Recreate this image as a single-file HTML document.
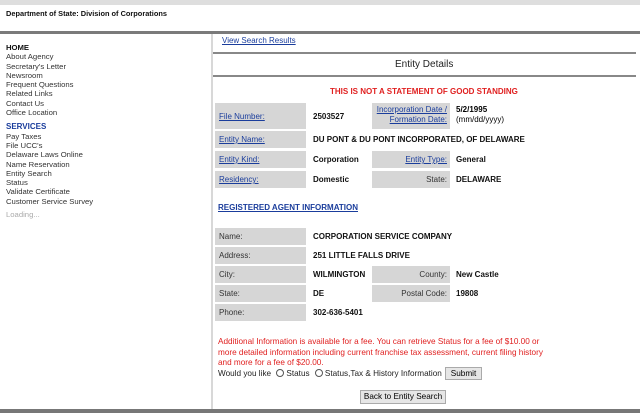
<!DOCTYPE html>
<html><head><style>
*{margin:0;padding:0;box-sizing:border-box}
body{width:640px;height:413px;overflow:hidden;background:#fff;font-family:"Liberation Sans",Arial,sans-serif;font-size:8px;color:#000;position:relative}
.a{position:absolute;white-space:nowrap}
.lnk{color:#1a3d9c;text-decoration:underline}
.box{position:absolute;background:#d6d6d6}
.side{color:#333;line-height:9.3px;font-size:7.7px}
.b{font-weight:bold;color:#111}
.btn{position:absolute;background:#e6e6e6;border:1px solid #aaa;font-size:8.2px;text-align:center;line-height:12px}
.rad{display:inline-block;width:8px;height:8px;border:1px solid #555;border-radius:50%;vertical-align:-1px;margin:0 2px 0 3px}
</style></head><body>
<div class="a" style="left:0;top:0;width:640px;height:5px;background:#dedede"></div>
<div class="a b" style="left:6px;top:9px;font-size:7.4px">Department of State: Division of Corporations</div>
<div class="a" style="left:0;top:31px;width:640px;height:3px;background:#7a7a7a"></div>
<div class="a" style="left:211px;top:34px;width:2px;height:375px;background:#d8d8d8"></div>
<div class="a side" style="left:6px;top:43px">
<div class="b">HOME</div><div>About Agency</div><div>Secretary's Letter</div><div>Newsroom</div><div>Frequent Questions</div><div>Related Links</div><div>Contact Us</div><div>Office Location</div>
<div style="color:#1a3d9c;font-weight:bold;margin-top:5px;font-size:8px">SERVICES</div>
<div>Pay Taxes</div><div>File UCC's</div><div>Delaware Laws Online</div><div>Name Reservation</div><div>Entity Search</div><div>Status</div><div>Validate Certificate</div><div>Customer Service Survey</div>
<div style="color:#aaa;margin-top:4px">Loading...</div>
</div>
<div class="a lnk" style="left:222px;top:36px">View Search Results</div>
<div class="a" style="left:213px;top:52px;width:423px;height:2px;background:#888"></div>
<div class="a" style="left:395px;top:59px;font-size:10px;color:#222">Entity Details</div>
<div class="a" style="left:213px;top:75px;width:423px;height:2px;background:#888"></div>
<div class="a" style="left:330px;top:87px;color:#e02020;font-weight:bold">THIS IS NOT A STATEMENT OF GOOD STANDING</div>

<div class="box" style="left:215px;top:103px;width:91px;height:26px"></div>
<div class="a lnk" style="left:219px;top:112px">File Number:</div>
<div class="a b" style="left:313px;top:112px">2503527</div>
<div class="box" style="left:372px;top:103px;width:78px;height:26px"></div>
<div class="a lnk" style="right:193px;top:105px;text-align:right;line-height:10px">Incorporation Date /<br>Formation Date:</div>
<div class="a" style="left:456px;top:105px;line-height:10px"><b>5/2/1995</b><br>(mm/dd/yyyy)</div>

<div class="box" style="left:215px;top:131px;width:91px;height:17px"></div>
<div class="a lnk" style="left:219px;top:135px">Entity Name:</div>
<div class="a b" style="left:313px;top:135px">DU PONT &amp; DU PONT INCORPORATED, OF DELAWARE</div>

<div class="box" style="left:215px;top:151px;width:91px;height:17px"></div>
<div class="a lnk" style="left:219px;top:155px">Entity Kind:</div>
<div class="a b" style="left:313px;top:155px">Corporation</div>
<div class="box" style="left:372px;top:151px;width:78px;height:17px"></div>
<div class="a lnk" style="right:193px;top:155px">Entity Type:</div>
<div class="a b" style="left:456px;top:155px">General</div>

<div class="box" style="left:215px;top:171px;width:91px;height:17px"></div>
<div class="a lnk" style="left:219px;top:175px">Residency:</div>
<div class="a b" style="left:313px;top:175px">Domestic</div>
<div class="box" style="left:372px;top:171px;width:78px;height:17px"></div>
<div class="a" style="right:193px;top:175px;color:#333">State:</div>
<div class="a b" style="left:456px;top:175px">DELAWARE</div>

<div class="a lnk" style="left:218px;top:203px;font-weight:bold">REGISTERED AGENT INFORMATION</div>

<div class="box" style="left:215px;top:228px;width:91px;height:17px"></div>
<div class="a" style="left:219px;top:232px;color:#333">Name:</div>
<div class="a b" style="left:313px;top:232px">CORPORATION SERVICE COMPANY</div>
<div class="box" style="left:215px;top:247px;width:91px;height:17px"></div>
<div class="a" style="left:219px;top:251px;color:#333">Address:</div>
<div class="a b" style="left:313px;top:251px">251 LITTLE FALLS DRIVE</div>
<div class="box" style="left:215px;top:266px;width:91px;height:17px"></div>
<div class="a" style="left:219px;top:270px;color:#333">City:</div>
<div class="a b" style="left:313px;top:270px">WILMINGTON</div>
<div class="box" style="left:372px;top:266px;width:78px;height:17px"></div>
<div class="a" style="right:193px;top:270px;color:#333">County:</div>
<div class="a b" style="left:456px;top:270px">New Castle</div>
<div class="box" style="left:215px;top:285px;width:91px;height:17px"></div>
<div class="a" style="left:219px;top:289px;color:#333">State:</div>
<div class="a b" style="left:313px;top:289px">DE</div>
<div class="box" style="left:372px;top:285px;width:78px;height:17px"></div>
<div class="a" style="right:193px;top:289px;color:#333">Postal Code:</div>
<div class="a b" style="left:456px;top:289px">19808</div>
<div class="box" style="left:215px;top:304px;width:91px;height:17px"></div>
<div class="a" style="left:219px;top:308px;color:#333">Phone:</div>
<div class="a b" style="left:313px;top:308px">302-636-5401</div>

<div class="a" style="left:218px;top:337px;color:#e02020;line-height:10.5px;font-size:8.2px">Additional Information is available for a fee. You can retrieve Status for a fee of $10.00 or<br>more detailed information including current franchise tax assessment, current filing history<br>and more for a fee of $20.00.</div>
<div class="a" style="left:218px;top:369px;color:#222;font-size:8.2px">Would you like <span class="rad"></span>Status <span class="rad"></span>Status,Tax &amp; History Information</div>
<div class="btn" style="left:445px;top:367px;width:37px;height:13px">Submit</div>
<div class="btn" style="left:360px;top:390px;width:86px;height:14px">Back to Entity Search</div>
<div class="a" style="left:0;top:409px;width:640px;height:4px;background:#777"></div>
</body></html>
